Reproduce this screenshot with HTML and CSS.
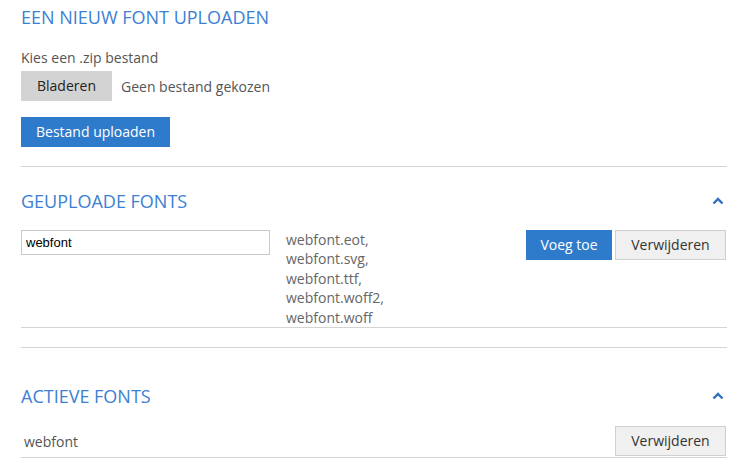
FILE: index.html
```html
<!DOCTYPE html>
<html lang="nl">

<head>
    <meta charset="UTF-8">
    <meta name="viewport" content="width=device-width, initial-scale=1.0">
    <title>Fonts</title>
    <link rel="stylesheet" href="styles.css">
</head>

<body>
    <div class="page">
        <section class="upload">
            <h2 class="title">EEN NIEUW FONT UPLOADEN</h2>
            <div class="label">Kies een .zip bestand</div>
            <div class="file-row">
                <span class="btn btn-gray">Bladeren</span>
                <span class="file-name">Geen bestand gekozen</span>
            </div>
            <span class="btn btn-blue">Bestand uploaden</span>
        </section>

        <section class="block uploaded">
            <div class="block-head">
                <h2 class="title">GEUPLOADE FONTS</h2>
                <svg class="chevron" width="12" height="8" viewBox="0 0 12 8">
                    <path d="M1.5 6.5 L6 2 L10.5 6.5" fill="none" stroke="#2f70bd" stroke-width="2.4"/>
                </svg>
            </div>
            <div class="font-row">
                <input class="font-input" type="text" value="webfont">
                <div class="files">
                    webfont.eot,<br>
                    webfont.svg,<br>
                    webfont.ttf,<br>
                    webfont.woff2,<br>
                    webfont.woff
                </div>
                <div class="actions">
                    <span class="btn btn-blue">Voeg toe</span>
                    <span class="btn btn-light">Verwijderen</span>
                </div>
            </div>
        </section>

        <section class="block active">
            <div class="block-head">
                <h2 class="title">ACTIEVE FONTS</h2>
                <svg class="chevron" width="12" height="8" viewBox="0 0 12 8">
                    <path d="M1.5 6.5 L6 2 L10.5 6.5" fill="none" stroke="#2f70bd" stroke-width="2.4"/>
                </svg>
            </div>
            <div class="active-row">
                <span class="active-name">webfont</span>
                <span class="btn btn-light">Verwijderen</span>
            </div>
        </section>
    </div>
</body>

</html>
```

FILE: styles.css
```css
body {
    margin: 0;
    font-family: "Open Sans", sans-serif;
    font-size: 14px;
    color: #555;
    background: #fff;
}

.page {
    width: 706px;
    padding: 0 0 0 21px;
}

.title {
    margin: 0;
    font-size: 18px;
    font-weight: 400;
    line-height: 24px;
    color: #3b80d3;
}

.upload {
    padding-top: 5px;
    padding-bottom: 19px;
    border-bottom: 1px solid #d4d4d4;
}

.label {
    margin-top: 19px;
    margin-bottom: 4px;
    line-height: 19px;
}

.file-row {
    display: flex;
    align-items: center;
    margin-bottom: 16px;
}

.file-name {
    margin-left: 9px;
}

.btn {
    display: inline-block;
    height: 30px;
    line-height: 30px;
    padding: 0 15px;
    box-sizing: border-box;
    font-size: 14px;
    white-space: nowrap;
}

.btn-gray {
    width: 91px;
    background: #d3d3d3;
    color: #222;
    text-align: center;
}

.btn-blue {
    background: #2f7bcb;
    color: #fff;
}

.btn-light {
    width: 111px;
    background: #f0f0f0;
    border: 1px solid #cfcfcf;
    line-height: 28px;
    color: #333;
    text-align: center;
}

.block-head {
    display: flex;
    justify-content: space-between;
    align-items: center;
}

.chevron {
    margin-right: 3px;
}

.uploaded {
    padding-top: 22px;
    border-bottom: 1px solid #d4d4d4;
}

.uploaded .block-head {
    margin-bottom: 17px;
}

.font-row {
    display: flex;
    align-items: flex-start;
    border-bottom: 1px solid #d4d4d4;
    margin-bottom: 19px;
}

.font-input {
    width: 249px;
    height: 25px;
    box-sizing: border-box;
    margin: 0;
    padding: 0 4px;
    border: 1px solid #c8c8c8;
    font-family: "Liberation Sans", Arial, sans-serif;
    font-size: 13px;
    color: #000;
}

.files {
    margin-left: 16px;
    line-height: 19.4px;
    color: #666;
}

.actions {
    margin-left: auto;
    display: flex;
    gap: 3px;
    margin-right: 1px;
}

.actions .btn-blue {
    width: 86px;
    padding: 0;
    text-align: center;
}

.active {
    padding-top: 36px;
}

.active .block-head {
    margin-bottom: 18px;
}

.active-row {
    display: flex;
    justify-content: space-between;
    align-items: center;
    padding-bottom: 1px;
    border-bottom: 1px solid #d4d4d4;
}

.active-name {
    margin-left: 3px;
}

.active-row .btn-light {
    margin-right: 1px;
}
```
